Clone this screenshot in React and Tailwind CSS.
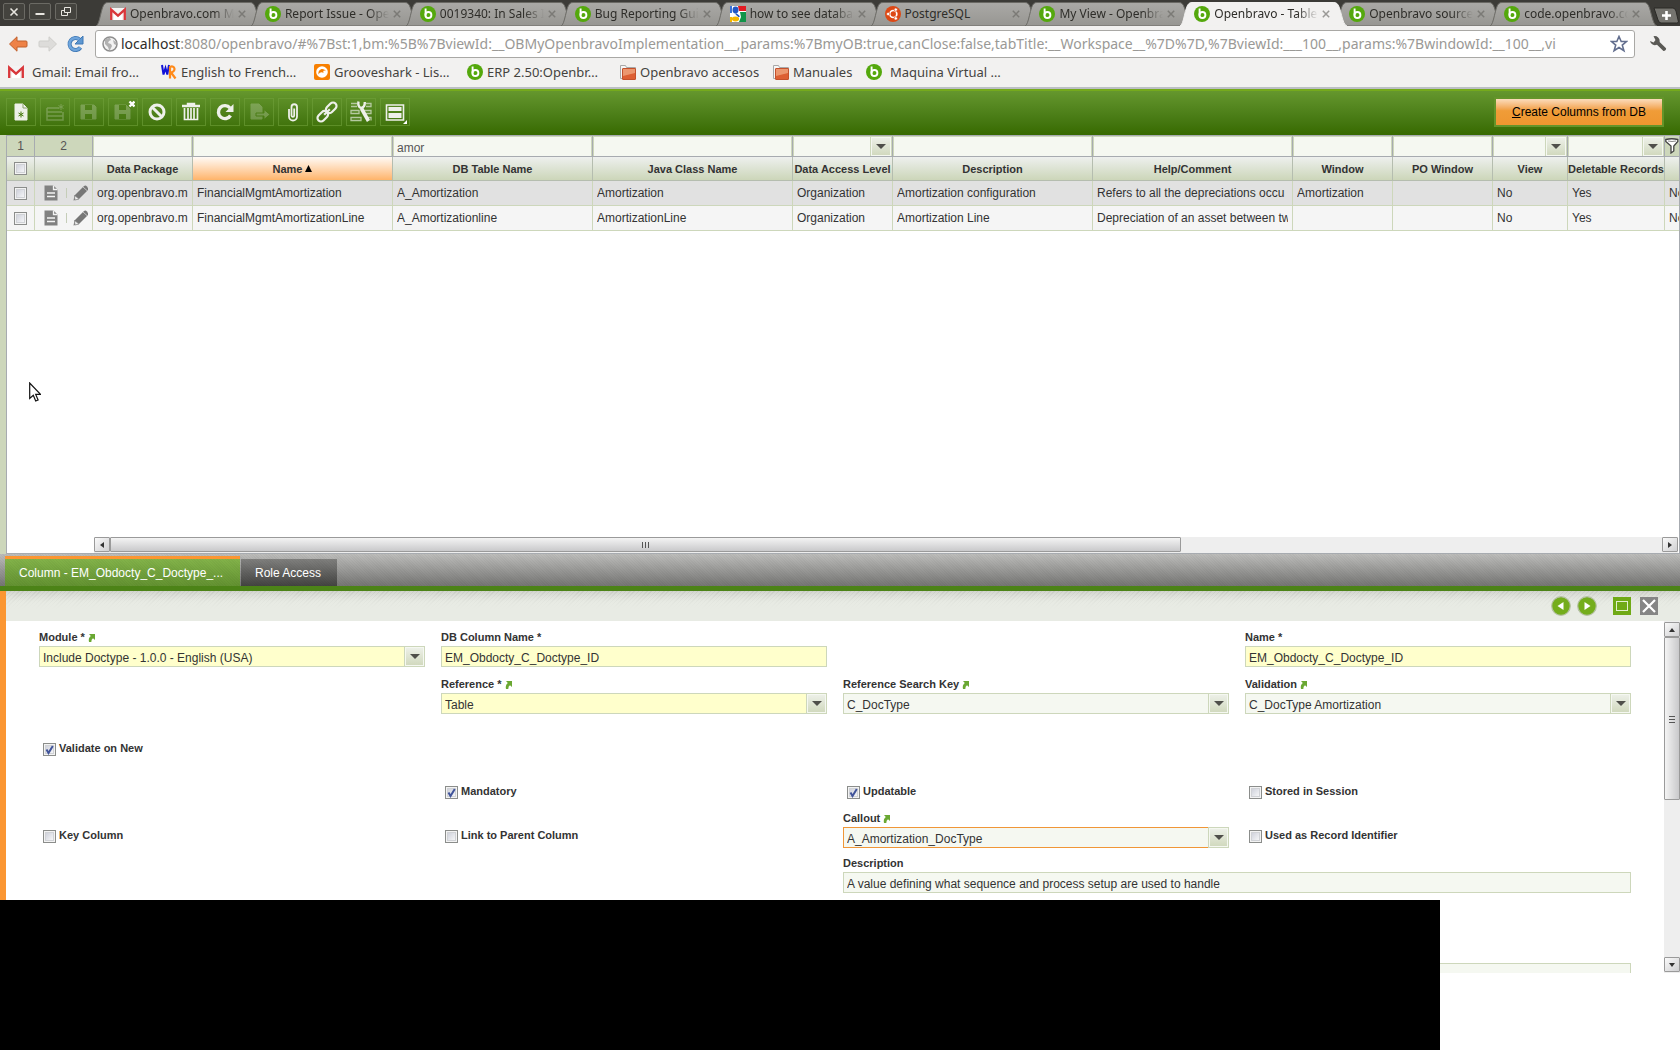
import clsx from 'clsx'

const browserTabs = [
  { icon: 'gmail', title: 'Openbravo.com Ma' },
  { icon: 'openbravo', title: 'Report Issue - Ope' },
  { icon: 'openbravo', title: '0019340: In Sales I' },
  { icon: 'openbravo', title: 'Bug Reporting Gui' },
  { icon: 'google', title: 'how to see databas' },
  { icon: 'ubuntu', title: 'PostgreSQL' },
  { icon: 'openbravo', title: 'My View - Openbra' },
  { icon: 'openbravo', title: 'Openbravo - Tables', active: true },
  { icon: 'openbravo', title: 'Openbravo source' },
  { icon: 'openbravo', title: 'code.openbravo.co' },
]

const bookmarks = [
  { icon: 'gmail', title: 'Gmail: Email fro…', space: 'gap-2' },
  { icon: 'wordref', title: 'English to French…' },
  { icon: 'grooveshark', title: 'Grooveshark - Lis…' },
  { icon: 'openbravo', title: 'ERP 2.50:Openbr…' },
  { icon: 'folder', title: 'Openbravo accesos' },
  { icon: 'folder', title: 'Manuales', width: 'w-[93px]' },
  { icon: 'openbravo', title: 'Maquina Virtual …', space: 'gap-2' },
]

const columns = [
  { title: 'Data Package', width: 'w-[100px]' },
  { title: 'Name', width: 'w-[200px]', sorted: true },
  { title: 'DB Table Name', width: 'w-[200px]', filter: 'amor' },
  { title: 'Java Class Name', width: 'w-[200px]' },
  { title: 'Data Access Level', width: 'w-[100px]', select: true },
  { title: 'Description', width: 'w-[200px]' },
  { title: 'Help/Comment', width: 'w-[200px]' },
  { title: 'Window', width: 'w-[100px]' },
  { title: 'PO Window', width: 'w-[100px]' },
  { title: 'View', width: 'w-[75px]', select: true },
  { title: 'Deletable Records', width: 'w-[97px]', select: true },
]

const rows = [
  [
    'org.openbravo.m',
    'FinancialMgmtAmortization',
    'A_Amortization',
    'Amortization',
    'Organization',
    'Amortization configuration',
    'Refers to all the depreciations occu',
    'Amortization',
    '',
    'No',
    'Yes',
    'No',
  ],
  [
    'org.openbravo.m',
    'FinancialMgmtAmortizationLine',
    'A_Amortizationline',
    'AmortizationLine',
    'Organization',
    'Amortization Line',
    'Depreciation of an asset between tw',
    '',
    '',
    'No',
    'Yes',
    'No',
  ],
]

function SiteIcon({ name }) {
  const cls = 'w-4 h-4 shrink-0'
  if (name === 'gmail') {
    return (
      <svg className={cls} viewBox="0 0 16 16">
        <rect x="0" y="2" width="16" height="12" rx="1" fill="#f4f4f4" />
        <path d="M3 14V5l5 5 5-5v9" fill="#fff" stroke="#e6c9c7" strokeWidth=".6" />
        <path d="M1.2 14V3.600L8 9.600l6.800-6V14" fill="none" stroke="#d9363a" strokeWidth="2.300" />
      </svg>
    )
  }
  if (name === 'google') {
    return (
      <svg className={cls} viewBox="0 0 16 16">
        <rect width="16" height="16" rx="1" fill="#fff" />
        <path d="M8 0h8v5H9z" fill="#e31b23" />
        <path d="M0 0h2v7H0z" fill="#3a72d8" />
        <path d="M10 6h6v10H9l2-5z" fill="#12944a" />
        <path d="M0 11h2v5H0z" fill="#f5b700" />
        <ellipse cx="5.500" cy="4" rx="3" ry="3.400" fill="#2457c4" />
        <path d="M6 7.500c0 1.500 3 1.500 3 3.500" stroke="#2457c4" strokeWidth="1.600" fill="none" />
        <ellipse cx="5.500" cy="13" rx="3.600" ry="2.400" fill="#f5b700" />
      </svg>
    )
  }
  if (name === 'ubuntu') {
    return (
      <svg className={cls} viewBox="0 0 16 16">
        <circle cx="8" cy="8" r="8" fill="#dd4814" />
        <circle cx="8.300" cy="8" r="3.500" fill="none" stroke="#fff" strokeWidth="1.700" />
        <g fill="#fff" stroke="#dd4814" strokeWidth=".7">
          <circle cx="3.200" cy="8" r="1.700" />
          <circle cx="10.800" cy="3.600" r="1.700" />
          <circle cx="10.800" cy="12.400" r="1.700" />
        </g>
      </svg>
    )
  }
  if (name === 'wordref') {
    return (
      <svg className={cls} viewBox="0 0 16 16" fill="none">
        <path d="M1 1l1.500 9.500L4.500 4l1.800 6.500L8 1" stroke="#1212d8" strokeWidth="2" />
        <path d="M9 14.500V3c5-2.500 6.500 4.500 1 5.500l4.500 6" stroke="#ff8a1a" strokeWidth="2.200" />
      </svg>
    )
  }
  if (name === 'grooveshark') {
    return (
      <svg className={cls} viewBox="0 0 16 16">
        <rect width="16" height="16" rx="2" fill="#f77f00" />
        <circle cx="8" cy="8" r="5.800" fill="#fff" />
        <path d="M4.600 10.500C3.500 5.500 9 2.800 12 7.200 9.500 5.800 8.800 7 9.600 9 7.500 7.500 5.500 8.500 4.600 10.500z" fill="#f77f00" />
      </svg>
    )
  }
  if (name === 'folder') {
    return (
      <svg className={cls} viewBox="0 0 16 16">
        <path d="M.5 14.500V1.500h5l1 2h9v11z" fill="#f6f6f6" stroke="#a8a8a8" />
        <rect x="2.500" y="4.500" width="13" height="11" rx=".5" fill="#dd5f33" stroke="#c4512c" />
        <path d="M3 5h12v4L3 12z" fill="#f0a57e" opacity=".8" />
      </svg>
    )
  }
  return (
    <svg className={cls} viewBox="0 0 16 16">
      <circle cx="8" cy="8" r="8" fill="#54a80c" />
      <circle cx="8.400" cy="9" r="3" fill="none" stroke="#fff" strokeWidth="1.900" />
      <path d="M5.600 2.500V9.500" stroke="#fff" strokeWidth="1.900" />
    </svg>
  )
}

function WindowButton({ label, children }) {
  return (
    <button
      aria-label={label}
      className="w-[22px] h-[17px] grid place-items-center rounded-[2px] border border-[#6b6a64] bg-[#44433e]"
    >
      <svg className="w-3 h-3" viewBox="0 0 12 12" fill="none" stroke="#e8e6e0">
        {children}
      </svg>
    </button>
  )
}

function BrowserTab({ icon, title, active }) {
  return (
    <div className={clsx('relative flex-1 min-w-0 h-6 -mr-3', active && 'z-10')}>
      <svg className="absolute inset-0 w-full h-full" viewBox="0 0 167 24" preserveAspectRatio="none">
        <defs>
          <linearGradient id="tabFill" x1="0" y1="0" x2="0" y2="1">
            <stop offset="0" stopColor="#aaa9a6" />
            <stop offset="1" stopColor="#979692" />
          </linearGradient>
        </defs>
        <path
          d="M0 24C4 23 5 4 9 1.500Q10 .5 12 .5H154Q156 .5 157 1.500C161 4 162 23 167 24z"
          fill={active ? '#f2f1f0' : 'url(#tabFill)'}
          stroke={active ? '#f2f1f0' : '#6a6964'}
        />
      </svg>
      <div className="relative flex items-center h-full pl-3.5 pr-[17px]">
        <SiteIcon name={icon} />
        <a
          href="#"
          className={clsx(
            'ml-1 flex-1 min-w-0 overflow-hidden whitespace-nowrap text-[12px] leading-5 text-[#2e2d29]',
            title.length > 12 && '[mask-image:linear-gradient(to_right,black_80%,transparent)]',
          )}
        >
          {title}
        </a>
        <button aria-label="Close tab" className="ml-1 w-2 h-2">
          <svg viewBox="0 0 8 8" stroke={active ? '#9a9996' : '#7b7a76'} strokeWidth="1.500">
            <path d="M.8 .8l6.400 6.400M7.200 .8L.8 7.200" />
          </svg>
        </button>
      </div>
    </div>
  )
}

function BrowserChrome() {
  return (
    <header className="font-['Noto_Sans',sans-serif] shrink-0">
      <div className="flex h-[26px] bg-[#3c3b37]">
        <div className="flex gap-1 pl-[3px] pt-[3px] w-24 shrink-0">
          <WindowButton label="Close"><path d="M2.500 2.500l7 7M9.500 2.500l-7 7" strokeWidth="1.600" /></WindowButton>
          <WindowButton label="Minimize"><path d="M1.500 8h9" strokeWidth="2" /></WindowButton>
          <WindowButton label="Restore"><path d="M4.500 1.500h6v5h-6zM4.500 4.500h-3v5h6v-3" /></WindowButton>
        </div>
        <nav className="flex flex-1 min-w-0 pt-0.5 pr-2">
          {browserTabs.map((tab) => <BrowserTab key={tab.title} {...tab} />)}
        </nav>
        <button aria-label="New tab" className="w-[27px] shrink-0 pt-1">
          <svg className="w-[26px] h-[17px]" viewBox="0 0 26 17">
            <path d="M1 1h19q2 0 3 3l2.500 11q0 1-2 1H8q-2 0-3-3z" fill="#75746f" stroke="#2b2a27" />
            <path d="M13.500 4v9M9 8.500h9" stroke="#fff" strokeWidth="2.600" />
          </svg>
        </button>
      </div>

      <div className="flex items-center h-[35px] bg-[#f2f1f0]">
        <div className="flex items-center w-[95px] pl-2 shrink-0">
          <button aria-label="Back">
            <svg className="w-5 h-[18px]" viewBox="0 0 20 18">
              <path d="M1.500 9L9 1.800V6h9q1 0 1 1v4q0 1-1 1H9v4.200z" fill="#ee8247" stroke="#c0602d" />
            </svg>
          </button>
          <button aria-label="Forward" className="ml-2.5">
            <svg className="w-5 h-[18px]" viewBox="0 0 20 18">
              <path d="M18.500 9L11 1.800V6H2q-1 0-1 1v4q0 1 1 1h9v4.200z" fill="#dddcda" stroke="#cfcecb" />
            </svg>
          </button>
          <button aria-label="Reload" className="ml-2">
            <svg className="w-[18px] h-[18px]" viewBox="0 0 18 18" fill="none">
              <path d="M14.500 12.500A6 6 0 1 1 13.500 4.500" stroke="#3f78b5" strokeWidth="4" />
              <path d="M17 1v8H9z" fill="#5e97d1" stroke="#3f78b5" />
              <path d="M14.300 12.500A6 6 0 1 1 13.500 4.500" stroke="#6fa5dc" strokeWidth="2.400" />
            </svg>
          </button>
        </div>
        <div className="flex items-center flex-1 min-w-0 h-7 px-1.5 bg-white border border-[#a9a8a5] rounded-[3px]">
          <svg className="w-4 h-4 shrink-0" viewBox="0 0 16 16">
            <circle cx="8" cy="8" r="7" fill="#f3f3f3" stroke="#8e8e8e" strokeWidth="1.500" />
            <path d="M3 4c2-2 4-2 5-2l1 2-2 1-1 2 3 1 1 2-2 4H7L6 11 3 8zM11 4l3 2v3l-2-1z" fill="#b1b1b1" />
          </svg>
          <p className="ml-[3px] flex-1 min-w-0 overflow-hidden whitespace-nowrap text-[14px] leading-6 text-[#9a9996]">
            <span className="text-[#2e2d29]">localhost</span>
            :8080/openbravo/#%7Bst:1,bm:%5B%7BviewId:__OBMyOpenbravoImplementation__,params:%7BmyOB:true,canClose:false,tabTitle:__Workspace__%7D%7D,%7BviewId:___100__,params:%7BwindowId:__100__,vi
          </p>
          <button aria-label="Bookmark this page">
            <svg className="w-[18px] h-[18px]" viewBox="0 0 18 18">
              <path d="M9 1.500l2.200 5h5.300l-4.200 3.600 1.600 5.600L9 12.500l-4.900 3.200 1.600-5.600L1.500 6.500h5.300z" fill="#fff" stroke="#626e8e" strokeWidth="1.600" />
            </svg>
          </button>
        </div>
        <button aria-label="Settings" className="w-[45px] pl-3.5 shrink-0">
          <svg className="w-[18px] h-[18px]" viewBox="0 0 18 18">
            <path d="M4.500 1.200A5 5 0 0 1 10.600 7l6.200 6q.8 1-.4 2.200t-2.200.6L8 9.700A5 5 0 0 1 1 6l3.600 1.400L6.500 5z" fill="#5a5955" />
          </svg>
        </button>
      </div>

      <nav className="flex items-center h-[26px] pl-2 pb-1 bg-[#f2f1f0] text-[13px] leading-5 text-[#44433f]">
        {bookmarks.map((b) => (
          <a
            key={b.title}
            href="#"
            className={clsx('flex items-center shrink-0 whitespace-nowrap', b.width || 'w-[153px]', b.space || 'gap-1')}
          >
            <SiteIcon name={b.icon} />
            {b.title}
          </a>
        ))}
      </nav>
    </header>
  )
}

function ToolButton({ label, dim, children }) {
  return (
    <button
      aria-label={label}
      className="w-[30px] h-7 grid place-items-center border border-[#6fa03a]/60 text-[#eef0ea]"
    >
      <svg className={clsx('w-6 h-6', dim && 'opacity-25')} viewBox="0 0 24 24" fill="none" stroke="currentColor">
        {children}
      </svg>
    </button>
  )
}

function Toolbar() {
  return (
    <div className="flex items-center justify-between shrink-0 h-[48px] pl-1.5 pr-4 border-t-2 border-[#bcbfc4] bg-linear-to-b from-[#67992f] to-[#376a00] shadow-[inset_0_2px_#75aa1c]">
      <div className="flex gap-1">
        <ToolButton label="New record">
          <path d="M6 4h8l4 4v12H6z" fill="currentColor" />
          <path d="M14 4v4h4" stroke="#8aa06c" />
          <path d="M12 11.500v6M9.500 13l5 3M14.500 13l-5 3" stroke="#47780f" />
        </ToolButton>
        <ToolButton label="New in grid" dim>
          <path d="M4 8h12M4 8v12h16V12M4 12h15M4 16h16" strokeWidth="1.500" />
          <path d="M18 4v6M15.500 5.500l5 3M20.500 5.500l-5 3" />
        </ToolButton>
        <ToolButton label="Save" dim>
          <path d="M4 5h13l2 2v12H4z" fill="currentColor" />
          <path d="M8 5h7v5H8zM8 14h7v5H8z" fill="#47780f" stroke="none" />
        </ToolButton>
        <ToolButton label="Save and close">
          <g opacity=".25">
            <path d="M4 5h11l4 4v10H4z" fill="currentColor" />
            <path d="M8 5h7v5H8zM8 14h7v5H8z" fill="#47780f" stroke="none" />
          </g>
          <path d="M18.500 1.500l5 5M23.500 1.500l-5 5" stroke="#fff" strokeWidth="2.400" />
        </ToolButton>
        <ToolButton label="Cancel">
          <circle cx="12" cy="12" r="7" strokeWidth="3" />
          <path d="M7 7l10 10" strokeWidth="3" />
        </ToolButton>
        <ToolButton label="Delete">
          <path d="M3 6h18M9 5V4h6v1" strokeWidth="2.400" />
          <path d="M5.500 8v11.500h13V8M9 8v11M12 8v11M15 8v11" strokeWidth="1.700" />
        </ToolButton>
        <ToolButton label="Refresh">
          <path d="M17.500 15.500A6.500 6.500 0 1 1 17 8" strokeWidth="3.400" />
          <path d="M20.500 4v8h-8z" fill="currentColor" stroke="none" />
        </ToolButton>
        <ToolButton label="Export" dim>
          <path d="M4 4h8l3 3v12H4z" fill="currentColor" />
          <path d="M9 13h8V9.500l6 5-6 5V16H9z" fill="currentColor" stroke="#47780f" />
        </ToolButton>
        <ToolButton label="Attachments">
          <path d="M8 9v7.500a4 4 0 0 0 8 0V7a2.700 2.700 0 0 0-5.500 0v8.500a1.300 1.300 0 0 0 2.700 0V8.500" strokeWidth="1.800" />
        </ToolButton>
        <ToolButton label="Direct link">
          <g transform="rotate(-45 12 12)" strokeWidth="2.200">
            <rect x="0" y="8.500" width="12" height="7" rx="3.500" />
            <rect x="12" y="8.500" width="12" height="7" rx="3.500" />
            <path d="M8 12h8" />
          </g>
        </ToolButton>
        <ToolButton label="Linked items">
          <path d="M2 3.500h6M2 6.500h6M2 10.500h8v3H2zM2 17.500h10v3H2zM17 3.500h5v3h-5M15 10.500h7v3h-5M19 17.500h3v3" stroke="#b5c9a0" strokeWidth="1.300" />
          <path d="M12.500 8.500l7 12.500" strokeWidth="3.600" />
          <path d="M9.500 1.500q-1 5 2.500 6.500 4-.5 3.800-6" strokeWidth="2.400" />
        </ToolButton>
        <ToolButton label="Toggle view">
          <path d="M3.500 5h17v15h-17z" strokeWidth="1.600" />
          <path d="M5.500 7h13v4h-13zM5.500 13h13v5h-13z" fill="currentColor" stroke="none" />
          <path d="M24 20v4h-4z" fill="#fff" stroke="none" />
        </ToolButton>
      </div>
      <button className="w-[170px] h-[30px] border-2 border-[#64942a] bg-linear-to-b from-[#fbdcbb] via-[#f09c38] via-45% to-[#ee962f] text-black">
        <span className="underline">C</span>reate Columns from DB
      </button>
    </div>
  )
}

function DropArrow({ className }) {
  return (
    <span
      className={clsx(
        'absolute top-0 right-0 grid place-items-center w-[21px] h-full border border-[#cdd7bb] bg-linear-to-b from-[#eef1ea] to-[#d0d8bc] shadow-[inset_0_0_0_1px_#f5f8f1] pointer-events-none',
        className,
      )}
    >
      <svg className="w-2.5 h-[5px]" viewBox="0 0 10 5"><path d="M0 0h10L5 5z" fill="#4f4f4a" /></svg>
    </span>
  )
}

function CheckBox({ id, label, checked }) {
  return (
    <span className="relative block w-[13px] h-[13px] shrink-0">
      <input
        type="checkbox"
        id={id}
        aria-label={label}
        defaultChecked={checked}
        className="peer block appearance-none w-[13px] h-[13px] border border-[#8b8d8b] bg-linear-to-br from-[#c6c9d4] to-white shadow-[inset_0_0_0_1px_#f3f3f3,inset_0_0_0_2px_#d0d2d6]"
      />
      <svg className="absolute inset-0 hidden peer-checked:block pointer-events-none" viewBox="0 0 13 13" fill="none">
        <path d="M3.500 6.500l2 3.500L9.800 3" stroke="#41549a" strokeWidth="2" />
      </svg>
    </span>
  )
}

function FilterCell({ title, select, filter }) {
  return (
    <td className="p-px pb-0 border-r border-b border-[#a7abb0]">
      <div className="relative h-[19px]">
        {select ? (
          <>
            <select aria-label={`Filter ${title}`} className="block appearance-none w-full h-[19px] bg-[#f5f8f1]" />
            <DropArrow className="border-y-0 border-r-0" />
          </>
        ) : (
          <input
            aria-label={`Filter ${title}`}
            defaultValue={filter}
            className="block w-full h-[19px] px-[3px] pt-0.5 bg-[#f5f8f1] outline-none"
          />
        )}
      </div>
    </td>
  )
}

function Grid() {
  const thBase = 'h-6 border-r border-b border-[#b5bdaf] bg-linear-to-b from-[#eef0ee] to-[#ccd6b9]'
  return (
    <section className="flex flex-1 min-h-0">
      <div className="w-1.5 shrink-0 bg-[#cdd7bb]" />
      <div className="flex flex-col flex-1 min-w-0 border border-[#a7abb0] bg-white">
        <table className="w-full table-fixed border-separate border-spacing-0">
          <colgroup>
            <col className="w-[28px]" />
            <col className="w-[58px]" />
            {columns.map((c) => <col key={c.title} className={c.width} />)}
            <col />
          </colgroup>
          <thead>
            <tr className="h-[21px] bg-[#cdd7bb] text-center text-[#555]">
              <td className="border-r border-b border-[#a7abb0]">1</td>
              <td className="border-r border-b border-[#a7abb0]">2</td>
              {columns.map((c) => <FilterCell key={c.title} {...c} />)}
              <td className="border-b border-[#a7abb0]">
                <button aria-label="Clear filter" className="block">
                  <svg className="w-3.5 h-4" viewBox="0 0 14 16">
                    <path d="M.8 1.500q6-1.500 12 0v2L8.800 8v5L6 15V8L.8 3.500z" fill="#fff" stroke="#444" strokeWidth="1.300" />
                    <path d="M3 3q4 1 8 0" stroke="#888" fill="none" />
                  </svg>
                </button>
              </td>
            </tr>
            <tr className="text-[11px]">
              <th className={thBase}><div className="pl-[7px]"><CheckBox label="Select all" /></div></th>
              <th className={thBase} />
              {columns.map((c) => (
                <th
                  key={c.title}
                  className={clsx(
                    'h-6 border-r border-b border-[#b5bdaf] bg-linear-to-b whitespace-nowrap overflow-hidden',
                    c.sorted ? 'from-[#fffaf5] to-[#ffb469]' : 'from-[#eef0ee] to-[#ccd6b9]',
                  )}
                >
                  <span className="inline-flex items-center gap-[3px]">
                    {c.title}
                    {c.sorted && <svg className="w-[7px] h-[7px]" viewBox="0 0 7 7"><path d="M0 7h7L3.500 0z" /></svg>}
                  </span>
                </th>
              ))}
              <th className="border-b border-[#b5bdaf] bg-linear-to-b from-[#eef0ee] to-[#ccd6b9]" />
            </tr>
          </thead>
          <tbody>
            {rows.map((row, i) => (
              <tr key={row[1]} className={clsx('h-[25px]', i === 0 ? 'bg-[#e1e1e1]' : 'bg-[#f5f5f5]')}>
                <td className="border-r border-b border-[#cdd7bb]">
                  <div className="pl-[7px]"><CheckBox label={`Select ${row[1]}`} /></div>
                </td>
                <td className="border-r border-b border-[#cdd7bb]">
                  <div className="flex items-center justify-between pl-2 pr-[3px]">
                    <button aria-label="Open in form">
                      <svg className="w-4 h-4" viewBox="0 0 16 16">
                        <path d="M1.500 .5h9l4 4v11h-13z" fill="#818181" />
                        <path d="M10.500 .5v4h4M4 8h8M4 11.500h8" stroke="#f4f4f4" strokeWidth="1.300" fill="none" />
                      </svg>
                    </button>
                    <span className="w-px h-2.5 bg-[#c5cdb8]" />
                    <button aria-label="Edit in grid">
                      <svg className="w-4 h-4" viewBox="0 0 16 16">
                        <path d="M.5 15.500l1-5L11 1q1.500-1 3 .5t1 3.500L6 14z" fill="#777" />
                        <path d="M1.500 10.500l4.500 3.500-4 1z" fill="#f2f2f2" stroke="#888" strokeWidth=".7" />
                        <path d="M10 2l4.500 4" stroke="#e4e4e4" strokeWidth=".7" />
                      </svg>
                    </button>
                  </div>
                </td>
                {row.map((text, j) => (
                  <td
                    key={j}
                    className={clsx('border-b border-[#cdd7bb] pl-1', j < row.length - 1 && 'border-r pr-1')}
                  >
                    <div className="overflow-hidden whitespace-nowrap">{text}</div>
                  </td>
                ))}
              </tr>
            ))}
          </tbody>
        </table>

        {/* horizontal scrollbar */}
        <div className="flex mt-auto ml-[87px] mr-px h-4 shrink-0 bg-[#eee]">
          <ScrollButton dir="left" />
          <div className="flex-1">
            <div className="grid place-items-center w-[69%] h-[15px] rounded-[1px] border border-[#9a9a9a] bg-linear-to-b from-[#f4f4f4] to-[#c9c9cb]">
              <svg className="w-2 h-2" viewBox="0 0 8 8" stroke="#555"><path d="M1.500 1v6M4.500 1v6M7.500 1v6" /></svg>
            </div>
          </div>
          <ScrollButton dir="right" />
        </div>
      </div>
    </section>
  )
}

const arrows = {
  left: 'M5 0v6L1 3z',
  right: 'M1 0v6l4-3z',
  up: 'M0 5h6L3 1z',
  down: 'M0 1h6L3 5z',
}

function ScrollButton({ dir }) {
  return (
    <button
      aria-label={`Scroll ${dir}`}
      className="grid place-items-center w-4 h-[15px] shrink-0 rounded-[1px] border border-[#9a9a9a] bg-linear-to-br from-[#fafafa] to-[#d0d0d2]"
    >
      <svg className="w-1.5 h-1.5" viewBox="0 0 6 6"><path d={arrows[dir]} fill="#333" /></svg>
    </button>
  )
}

function LinkArrow() {
  return (
    <svg className="w-[7px] h-2 mt-[5px]" viewBox="0 0 7 8">
      <path d="M1 0h6v6L5 4.200Q3.200 5.200 3.300 8H1Q0 4 2.800 2z" fill="#6aa832" />
    </svg>
  )
}

function Field({ id, label, value, select, link, required, focused, className }) {
  const box = clsx(
    'block appearance-none w-full h-[21px] px-[3px] pt-0.5 border outline-none',
    required ? 'bg-[#ffffcc]' : 'bg-[#f5f8f1]',
    focused ? 'border-[#f09637]' : 'border-[#cdd7bb]',
  )
  return (
    <div className={className}>
      <label htmlFor={id} className="flex items-start gap-[3px] h-[17px] text-[11px] leading-4 font-bold">
        {label}{required && ' *'}
        {link && <LinkArrow />}
      </label>
      <div className="relative">
        {select ? (
          <select id={id} className={box}><option>{value}</option></select>
        ) : (
          <input id={id} defaultValue={value} className={box} />
        )}
        {select && <DropArrow />}
      </div>
    </div>
  )
}

function CheckField({ id, label, checked, className }) {
  return (
    <div className={clsx('flex items-start gap-[3px] pl-1 pt-5', className)}>
      <CheckBox id={id} label={label} checked={checked} />
      <label htmlFor={id} className="text-[11px] leading-[10px] font-bold">{label}</label>
    </div>
  )
}

function ChildTabs() {
  return (
    <nav className="flex items-end shrink-0 h-[37px] pl-[5px] gap-px border-b-5 border-[#4c8317] bg-[repeating-linear-gradient(45deg,#00000008_0_1px,transparent_1px_2px),linear-gradient(#bdbdbb,#757573)] text-white">
      <a href="#" className="px-3.5 h-[30px] w-[235px] leading-7 border-t-3 border-[#fb9632] bg-[repeating-linear-gradient(45deg,#00000008_0_1px,transparent_1px_2px),linear-gradient(#83b34a,#639231)] whitespace-nowrap">
        Column - EM_Obdocty_C_Doctype_...
      </a>
      <a href="#" className="px-3.5 h-[27px] w-24 leading-7 bg-[repeating-linear-gradient(45deg,#00000008_0_1px,transparent_1px_2px),linear-gradient(#80807e,#434341)] whitespace-nowrap">
        Role Access
      </a>
    </nav>
  )
}

function RecordForm() {
  return (
    <section className="flex shrink-0 h-[382px]">
      <div className="w-1.5 shrink-0 bg-[#fb9632]" />
      <div className="flex flex-col flex-1 min-w-0">
        <div className="flex items-center justify-end shrink-0 h-[30px] pr-[22px] bg-[linear-gradient(transparent,#e8ebe4_60%),repeating-linear-gradient(135deg,#0000000d_0_1px,transparent_1px_3px),linear-gradient(#d2d4ce,#e8ebe4_40%)]">
          <button aria-label="Previous record">
            <svg className="w-5 h-5" viewBox="0 0 20 20">
              <circle cx="10" cy="10" r="9.300" fill="#74ad1c" stroke="#b5c1a4" strokeWidth="1.200" />
              <path d="M12.500 6v8L6.500 10z" fill="#fff" />
            </svg>
          </button>
          <button aria-label="Next record" className="ml-1.5">
            <svg className="w-5 h-5" viewBox="0 0 20 20">
              <circle cx="10" cy="10" r="9.300" fill="#74ad1c" stroke="#b5c1a4" strokeWidth="1.200" />
              <path d="M7.500 6v8l6-4z" fill="#fff" />
            </svg>
          </button>
          <button aria-label="Maximize" className="ml-4 grid place-items-center w-[18px] h-[18px] bg-[#70aa16]">
            <span className="w-3 h-2.5 border border-[#e3efcf]" />
          </button>
          <button aria-label="Close form" className="ml-[9px] w-[18px] h-[18px] bg-[#858585]">
            <svg viewBox="0 0 18 18" stroke="#fff" strokeWidth="2.200"><path d="M3 3l12 12M15 3L3 15" /></svg>
          </button>
        </div>

        <div className="flex flex-1 min-h-0">
          <form className="grid flex-1 min-w-0 grid-cols-4 grid-rows-[47px_47px_43px_44px_45px_91px_38px] gap-x-4 px-[33px] pt-2 overflow-hidden bg-white">
            <Field id="module" label="Module" value="Include Doctype - 1.0.0 - English (USA)" select link required />
            <Field id="dbcolumn" label="DB Column Name" value="EM_Obdocty_C_Doctype_ID" required />
            <Field id="name" label="Name" value="EM_Obdocty_C_Doctype_ID" required className="col-start-4" />

            <Field id="reference" label="Reference" value="Table" select link required className="col-start-2" />
            <Field id="searchkey" label="Reference Search Key" value="C_DocType" select link />
            <Field id="validation" label="Validation" value="C_DocType Amortization" select link />

            <CheckField id="validatenew" label="Validate on New" checked className="col-span-4" />

            <CheckField id="mandatory" label="Mandatory" checked className="col-start-2" />
            <CheckField id="updatable" label="Updatable" checked />
            <CheckField id="session" label="Stored in Session" />

            <CheckField id="keycolumn" label="Key Column" />
            <CheckField id="parentlink" label="Link to Parent Column" />
            <Field id="callout" label="Callout" value="A_Amortization_DocType" select link focused />
            <CheckField id="identifier" label="Used as Record Identifier" />

            <Field
              id="description"
              label="Description"
              value="A value defining what sequence and process setup are used to handle"
              className="col-start-3 col-span-2"
            />
            <Field id="help" value="" className="col-start-3 col-span-2" />
          </form>

          {/* vertical scrollbar */}
          <div className="flex flex-col w-4 shrink-0 py-px bg-[#eee]">
            <ScrollButton dir="up" />
            <div className="flex-1">
              <div className="grid place-items-center w-4 h-[51%] rounded-[1px] border border-[#9a9a9a] bg-linear-to-r from-[#f4f4f4] to-[#c9c9cb]">
                <svg className="w-2 h-2" viewBox="0 0 8 8" stroke="#555"><path d="M1 1.500h6M1 4.500h6M1 7.500h6" /></svg>
              </div>
            </div>
            <ScrollButton dir="down" />
          </div>
        </div>
      </div>
    </section>
  )
}

export default function App() {
  return (
    <main className="relative flex flex-col h-screen overflow-hidden bg-white font-['Liberation_Sans',Arial,sans-serif] text-[12px] leading-4 text-[#333]">
      <BrowserChrome />
      <Toolbar />
      <Grid />
      <ChildTabs />
      <RecordForm />
      <div className="h-[77px] shrink-0 bg-white" />

      {/* blacked out corner below the form */}
      <div className="absolute bottom-0 left-0 w-6/7 h-[150px] bg-black" />

      {/* mouse pointer */}
      <svg className="absolute left-[29px] top-[382px] w-3 h-5" viewBox="0 0 12 20">
        <path d="M.7 1v15.500l3.600-3.300 2.400 5.800 2.400-1-2.400-5.600h4.800z" fill="#fff" stroke="#111" strokeWidth="1.200" />
      </svg>
    </main>
  )
}
